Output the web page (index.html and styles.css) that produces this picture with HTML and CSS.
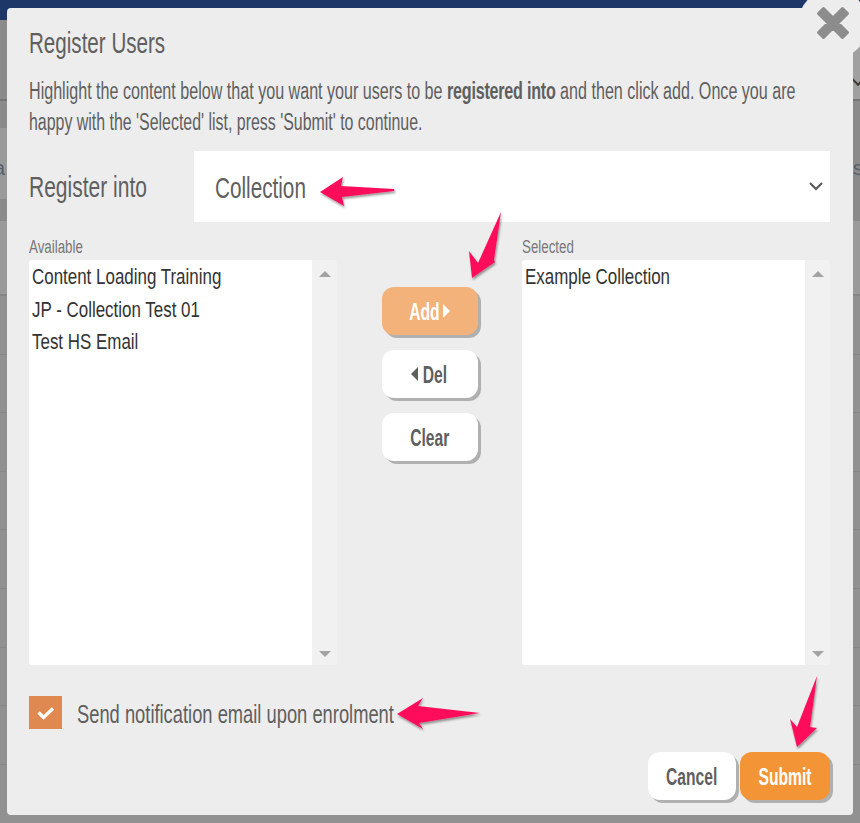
FILE: index.html
```html
<!DOCTYPE html>
<html lang="en">
<head>
  <meta charset="UTF-8" />
  <title>Register Users</title>
  <link rel="stylesheet" href="styles.css">
</head>
<body>
  <!-- Page behind the overlay -->
  <div class="backdrop">
    <div class="bg-row bg-nav"></div>
    <div class="bg-row bg-head"><span class="bg-chevron"></span></div>
    <div class="bg-row bg-tabs"><span class="bg-text">a</span><span class="bg-text">rs</span></div>
    <div class="bg-row bg-dark"></div>
    <div class="bg-row bg-light"></div>
    <div class="bg-row"></div>
    <div class="bg-row"></div>
    <div class="bg-row"></div>
    <div class="bg-row"></div>
    <div class="bg-row"></div>
    <div class="bg-row"></div>
    <div class="bg-row"></div>
    <div class="bg-row"></div>
  </div>

  <!-- Modal -->
  <div class="modal">
    <h1 class="title"><span class="squeeze">Register Users</span></h1>
    <p class="intro">
      <span class="squeeze">Highlight the content below that you want your users to be <b>registered into</b> and then click add. Once you are</span>
      <span class="squeeze">happy with the 'Selected' list, press 'Submit' to continue.</span>
    </p>

    <div class="register-row">
      <label class="register-label"><span class="squeeze">Register into</span></label>
      <div class="select">
        <span class="squeeze">Collection</span>
        <svg class="chevron" width="14" height="9" viewBox="0 0 14 9"><path d="M1 1l6 6 6-6" fill="none" stroke="#555" stroke-width="2"/></svg>
      </div>
    </div>

    <div class="pickers">
      <div class="picker">
        <div class="picker-label"><span class="squeeze">Available</span></div>
        <div class="listbox">
          <ul class="options">
            <li><span class="squeeze">Content Loading Training</span></li>
            <li><span class="squeeze">JP - Collection Test 01</span></li>
            <li><span class="squeeze">Test HS Email</span></li>
          </ul>
          <div class="scrollbar"><i class="arrow-up"></i><i class="arrow-down"></i></div>
        </div>
      </div>

      <div class="move-btns">
        <button class="btn btn-add"><span class="btn-text">Add</span><i class="tri-right"></i></button>
        <button class="btn"><i class="tri-left"></i><span class="btn-text">Del</span></button>
        <button class="btn"><span class="btn-text">Clear</span></button>
      </div>

      <div class="picker">
        <div class="picker-label"><span class="squeeze">Selected</span></div>
        <div class="listbox">
          <ul class="options">
            <li><span class="squeeze">Example Collection</span></li>
          </ul>
          <div class="scrollbar"><i class="arrow-up"></i><i class="arrow-down"></i></div>
        </div>
      </div>
    </div>

    <div class="notify">
      <span class="checkbox">
        <svg width="18" height="14" viewBox="0 0 18 14"><path d="M1.5 6.500l5 5L16 2.500" fill="none" stroke="#fff" stroke-width="3.400"/></svg>
      </span>
      <span class="notify-text"><span class="squeeze">Send notification email upon enrolment</span></span>
    </div>

    <div class="footer">
      <button class="btn btn-cancel"><span class="btn-text">Cancel</span></button>
      <button class="btn btn-submit"><span class="btn-text">Submit</span></button>
    </div>
  </div>

  <!-- Close button -->
  <div class="close">
    <svg class="close-x" width="34" height="34" viewBox="0 0 34 34"><path d="M2.500 7.500l5-5L17 12l9.500-9.500 5 5L22 17l9.500 9.500-5 5L17 22l-9.500 9.500-5-5L12 17z" fill="#8c8c8c" stroke="#8c8c8c" stroke-width="3" stroke-linejoin="round"/></svg>
  </div>

  <!-- Annotation arrows -->
  <svg class="arrows" width="860" height="823" viewBox="0 0 860 823">
    <defs>
      <filter id="arrow-shadow" x="-30%" y="-30%" width="160%" height="160%">
        <feDropShadow dx="1" dy="2" stdDeviation="1.200" flood-color="#000" flood-opacity="0.4"/>
      </filter>
    </defs>
    <g fill="#ff0f5b" filter="url(#arrow-shadow)">
      <path d="M320 192L343 177 341 186 394 189 394.500 191 342 197 344 206Z"/>
      <path d="M501 212L494 260 495 262 472 278 469 251 478 263Z"/>
      <path d="M397 714L423 698 418 706 480 713 419 723 423 729Z"/>
      <path d="M817 676L810 727 817 728 797 747 790 719 797 727Z"/>
    </g>
  </svg>
</body>
</html>
```

FILE: styles.css
```css
* {
  box-sizing: border-box;
  margin: 0;
  padding: 0;
}

html, body {
  height: 100%;
}

body {
  font-family: 'Liberation Sans', sans-serif;
  color: #5f5f5f;
  background: #919191;
  overflow: hidden;
  padding: 8px 7px;
}

/* Text in the page is a tall narrow face, so squeeze it sideways */
.squeeze {
  display: block;
  white-space: nowrap;
  transform-origin: 0 50%;
  transform: scaleX(.7);
}

/* === BACKDROP === */
.backdrop {
  position: fixed;
  inset: 0;
}

.bg-row {
  height: 58.600px;
  border-bottom: 1px solid #878787;
  position: relative;
}

.bg-nav {
  height: 20px;
  background: #1d3768;
  border: none;
}

.bg-head {
  height: 81px;
  background: linear-gradient(to right, #8b8b8b 50%, #a0a0a0 50%);
  border-bottom: 2px solid #757575;
}

.bg-tabs {
  height: 98px;
  background: linear-gradient(to right, #8b8b8b 50%, transparent 50%) 0 0 / 100% 27px no-repeat,
    linear-gradient(to right, #9a9a9a 50%, #8b8b8b 50%);
  border: none;
  display: flex;
  justify-content: space-between;
  align-items: flex-end;
  padding-bottom: 19px;
  font-size: 20px;
  color: #55606b;
}

.bg-text:first-child {
  margin-left: -6px;
}

.bg-text:last-child {
  margin-right: -3px;
}

.bg-dark {
  height: 22px;
  background: #8b8b8b;
  border: none;
}

.bg-light {
  height: 75px;
  background: #9a9a9a;
  border-bottom: 2px solid #868686;
}

.bg-chevron {
  position: absolute;
  right: -3px;
  top: 54px;
  width: 10px;
  height: 10px;
  border-left: 2px solid #3f3a30;
  border-bottom: 2px solid #3f3a30;
  transform: rotate(-45deg);
}

/* === MODAL === */
.modal {
  position: relative;
  height: 807px;
  background: #ededed;
  border-radius: 4px;
  padding: 18px 23px 0 22px;
  display: flex;
  flex-direction: column;
}

.title {
  font-size: 29px;
  font-weight: 400;
  line-height: 35px;
}

.title .squeeze {
  transform: scaleX(.71);
}

.intro {
  margin-top: 15px;
  font-size: 23px;
  line-height: 31px;
}

.intro .squeeze {
  transform: scaleX(.7);
}

.intro .squeeze + .squeeze {
  transform: scaleX(.692);
}

.intro b {
  font-weight: 700;
  letter-spacing: -.3px;
}

/* Register into */
.register-row {
  display: flex;
  align-items: center;
  margin-top: 13px;
  height: 71px;
}

.register-label {
  width: 165px;
  font-size: 30px;
}

.select {
  flex: 1;
  height: 71px;
  background: #fff;
  padding: 0 7px 0 21px;
  display: flex;
  justify-content: space-between;
  align-items: center;
  font-size: 30px;
}

.select .squeeze {
  transform: scaleX(.69);
  margin-top: 2px;
}

/* Pickers */
.pickers {
  display: flex;
  margin-top: 13px;
}

.picker {
  width: 308px;
}

.picker-label {
  font-size: 18px;
  line-height: 25px;
  color: #777;
}

.picker-label .squeeze {
  transform: scaleX(.74);
}

.listbox {
  display: flex;
  height: 405px;
  border-radius: 3px;
  overflow: hidden;
}

.options {
  flex: 1;
  background: #fff;
  list-style: none;
  padding: 1px 3px;
  font-size: 22px;
  line-height: 32.500px;
  color: #333;
}

.options .squeeze {
  transform: scaleX(.77);
}

.scrollbar {
  width: 25px;
  background: #f1f1f1;
  display: flex;
  flex-direction: column;
  justify-content: space-between;
  align-items: center;
  padding: 11px 0 8px;
}

.arrow-up {
  border: 6px solid transparent;
  border-top: 0;
  border-bottom: 6px solid #a3a3a3;
}

.arrow-down {
  border: 6px solid transparent;
  border-bottom: 0;
  border-top: 6px solid #a3a3a3;
}

.move-btns {
  width: 185px;
  padding-top: 52px;
  display: flex;
  flex-direction: column;
  align-items: center;
  gap: 15px;
}

/* Buttons */
.btn {
  width: 96px;
  height: 48px;
  border: none;
  border-radius: 12px;
  background: #fff;
  color: #5f5f5f;
  font-family: inherit;
  font-size: 23px;
  font-weight: 700;
  box-shadow: 3px 3px 0 #b0b0b0;
  display: flex;
  justify-content: center;
  align-items: center;
}

.btn-text {
  display: block;
  padding-top: 2px;
  transform: scaleX(.68);
}

.btn-add {
  background: #f2b279;
  color: #fff;
}

.btn-add .btn-text {
  margin: 0 -8px 0 -7px;
}

.btn-submit {
  background: #f39536;
  color: #fff;
  width: 90px;
}

.btn-cancel {
  width: 88px;
}

.tri-right, .tri-left {
  display: block;
  border: 7px solid transparent;
}

.tri-right {
  border-left: 7px solid #fff;
  border-right: 0;
  margin-left: 4px;
}

.tri-left {
  border-right: 7px solid #5f5f5f;
  border-left: 0;
  margin: 0 -1px 0 4px;
}

/* Notification */
.notify {
  display: flex;
  align-items: center;
  height: 33px;
  margin-top: 31px;
}

.checkbox {
  width: 33px;
  height: 33px;
  background: #df8850;
  display: flex;
  justify-content: center;
  align-items: center;
}

.notify-text {
  margin-left: 15px;
  padding-top: 4px;
  font-size: 26px;
}

.notify-text .squeeze {
  transform: scaleX(.705);
}

/* Footer */
.footer {
  display: flex;
  justify-content: flex-end;
  gap: 4px;
  margin-top: 23px;
}

/* Close button */
.close {
  position: fixed;
  top: -11px;
  left: 798px;
  width: 70px;
  height: 70px;
  border-radius: 50%;
  background: #ededed;
  display: flex;
  justify-content: center;
  align-items: center;
}

.close-x {
  margin: -2px 1px 0 0;
}

/* Arrows lie over everything */
.arrows {
  position: fixed;
  top: 0;
  left: 0;
  pointer-events: none;
}
```
